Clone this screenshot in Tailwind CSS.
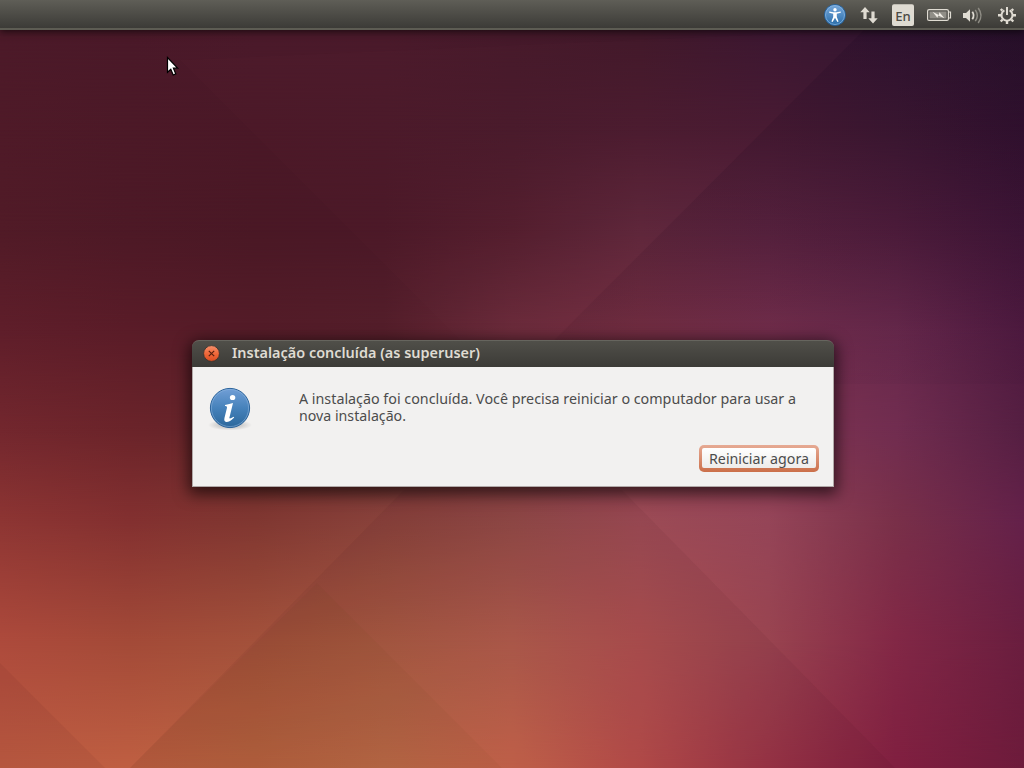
<!DOCTYPE html>
<html lang="pt-BR">
<head>
<meta charset="utf-8">
<title>Instalação concluída</title>
<script src="https://cdn.jsdelivr.net/npm/@tailwindcss/browser@4"></script>
</head>
<body class="relative h-screen w-screen overflow-hidden bg-[#4c1a29] font-['Noto_Sans','Open_Sans',sans-serif]">
<!-- wallpaper: horizontal colour rows faded into each other -->
<svg id="wall" class="absolute inset-0" width="1024" height="768" viewBox="0 0 1024 768" aria-hidden="true"></svg>
<script>
const rows = [
 [30,'4c1a29 4a1929 4b1a2b 4a1a2b 45192a 401829 3a1630 301430 28112a'],
 [130,'4f1a28 4c1927 4a1827 4a1929 481a2b 4a1b2f 471a32 3d1832 32112f'],
 [230,'511b27 4d1926 4a1825 4a1827 521d2d 5e263a 5a233f 501d3c 401637'],
 [330,'5f1e2a 5a1c28 541c28 541e2a 6a2a3a 742e42 742e4c 68294c 4f1a40'],
 [430,'73272e 6b242a 62252a 652a30 742f3c 7e3448 803550 712d50 551f42'],
 [520,'8d3533 833030 803731 89423b 924a47 9c4b55 954558 793049 64214a'],
 [640,'ad4a3c a34a38 a3513b a85a42 b05c4c ad5050 994450 822846 6a1e3f'],
 [768,'be5c42 bf5f42 bb6541 bf6c48 c7654b b84d4a 9a3446 801f40 6d1b3b']];
let defs = '<linearGradient id="f" x2="0" y2="1"><stop stop-color="#000"/><stop offset="1" stop-color="#fff"/></linearGradient><linearGradient id="shade" gradientUnits="userSpaceOnUse" x1="0" y1="30" x2="0" y2="384"><stop stop-color="#10001c" stop-opacity=".09"/><stop offset=".6" stop-color="#10001c" stop-opacity=".08"/><stop offset="1" stop-color="#10001c" stop-opacity=".035"/></linearGradient>', body = '';
rows.forEach(([y, c], i) => {
  defs += `<linearGradient id="g${i}" gradientUnits="userSpaceOnUse" x2="1024">` + c.split(' ').map((k, j) => `<stop offset="${j / 8}" stop-color="#${k}"/>`).join('') + '</linearGradient>';
  if (!i) { body += '<rect width="1024" height="768" fill="url(#g0)"/>'; return; }
  const t = rows[i - 1][0], h = y - t;
  defs += `<mask id="m${i}" maskUnits="userSpaceOnUse" x="0" y="${t}" width="1024" height="${768 - t}" style="mask-type:luminance" color-interpolation="sRGB"><rect y="${t}" width="1024" height="${h}" fill="url(#f)"/><rect y="${y}" width="1024" height="${768 - y}" fill="#fff"/></mask>`;
  body += `<rect y="${t}" width="1024" height="${768 - t}" fill="url(#g${i})" mask="url(#m${i})"/>`;
});
body += '<path d="M864 30H1024V384H510Z" fill="url(#shade)"/>' +
 '<path d="M404 490H622L895 768H130Z" fill="#200010" opacity=".05"/>' +
 '<path d="M317 583L502 768H130Z" fill="#304000" opacity=".035"/>' +
 '<path d="M0 663L105 768H0Z" fill="#200010" opacity=".05"/>' +
 '<path d="M180 60L460 340H556L864 30Z" fill="#ff8090" opacity=".012"/>';
document.getElementById('wall').innerHTML = '<defs>' + defs + '</defs>' + body;
</script>

<div class="relative flex h-full flex-col">
  <header class="flex h-[30px] shrink-0 items-center justify-end border-b-2 border-[#5d5c53] bg-linear-to-b from-[#5f5e57] to-[#3c3b37] shadow-[0_2px_7px_rgba(0,0,0,0.6)]">
    <svg class="mt-px" width="210" height="28" viewBox="814 0 210 28" aria-hidden="true">
      <defs>
        <linearGradient id="blue" x2="0" y2="1"><stop stop-color="#78a9dc"/><stop offset="1" stop-color="#286ca8"/></linearGradient>
      </defs>
      <circle cx="835" cy="14" r="10.5" fill="url(#blue)" stroke="#245f99"/>
      <circle cx="835" cy="14" r="9.5" fill="none" stroke="#8bb7e2" stroke-width=".7"/>
      <circle cx="835" cy="8.7" r="1.7" fill="#fff"/>
      <path d="M829.2 10.4L833.4 11.2H836.6L840.8 10.4V11.7L836.8 12.8V16L838.6 20.6L837.4 21L835 16.7L832.6 21L831.4 20.6L833.2 16V12.8L829.2 11.7Z" fill="#fff"/>
      <path d="M865 6L869.7 11.3H866.6V18H863.4V11.3H860.3Z M873 22.5L868.3 17.2H871.4V10.5H874.6V17.2H877.7Z" fill="#dfdbd2"/>
      <rect x="892" y="3.3" width="22" height="21.7" rx="2" fill="#dfdbd2"/>
      <text x="903" y="20" text-anchor="middle" font-size="12.5" font-weight="500" fill="#4b4a44" textLength="15.5" lengthAdjust="spacingAndGlyphs">En</text>
      <rect x="927.6" y="8.6" width="20.8" height="10.8" rx="1.5" fill="none" stroke="#dfdbd2" stroke-width="1.2"/>
      <rect x="929.5" y="10.5" width="17" height="7" fill="#908e87"/>
      <path d="M949 11H950.5V17H949" fill="none" stroke="#dfdbd2" stroke-width="1.2"/>
      <path d="M932.5 10.8L938.8 14L939.4 11.2L944.5 17.2L938.2 14.6L937.4 16.8Z" fill="#efece5"/>
      <path d="M963 12H966L970 8.3V20.7L966 17H963Z" fill="#dfdbd2"/>
      <path d="M972.3 10.8Q975 14.5 972.3 18.2" fill="none" stroke="#dfdbd2" stroke-width="1.8"/>
      <path d="M975.3 8.8Q979.2 14.5 975.3 20.2M978.2 7Q983.8 14.5 978.2 22" fill="none" stroke="#8e8c84" stroke-width="1.5"/>
      <g fill="none" stroke="#dfdbd2">
        <path d="M1004.4 9.4A5.5 5.5 0 1 0 1009.6 9.4" stroke-width="2"/>
        <path d="M1007 6V14" stroke-width="2"/>
        <path d="M1002.4 9.6L1000.8 8M1011.6 9.6L1013.2 8M1001.5 14.2H998M1012.5 14.2H1016M1002.7 18.5L1000.7 20.5M1011.3 18.5L1013.3 20.5M1007 20V23" stroke-width="2.4"/>
      </g>
    </svg>
  </header>

  <main class="mt-[310px] ml-[192px] flex h-[147px] w-[642px] flex-col rounded-t-[7px] shadow-[0_4px_15px_3px_rgba(0,0,0,0.62)]">
    <div class="flex h-[27px] shrink-0 items-start rounded-t-[7px] border-t border-[#66655e] bg-linear-to-b from-[#504f49] to-[#3c3b37] pl-[11px]">
      <svg class="mt-1" width="17" height="17" viewBox="0 0 17 17" aria-hidden="true">
        <defs><linearGradient id="close" x2="0" y2="1"><stop stop-color="#f7906c"/><stop offset=".5" stop-color="#ef693b"/><stop offset="1" stop-color="#da4c20"/></linearGradient></defs>
        <circle cx="8.5" cy="8.5" r="7.9" fill="url(#close)" stroke="#33322e" stroke-width=".8"/>
        <path d="M5.8 5.8L11.2 11.2M11.2 5.8L5.8 11.2" stroke="#58200f" stroke-width="1.2"/>
      </svg>
      <svg class="ml-3" width="260" height="26" role="img"><text x="0" y="17" font-size="14" font-weight="600" fill="#dfdbd2" textLength="248" lengthAdjust="spacingAndGlyphs">Instalação concluída (as superuser)</text></svg>
    </div>
    <div class="flex flex-1 flex-col border border-t-0 border-[#b1a9a8] bg-[#f2f1f0] pt-[19px] pl-[14px] pr-[14px]">
      <div class="flex h-[59px]">
        <svg width="46" height="46" viewBox="0 0 46 46" aria-hidden="true">
          <defs>
            <radialGradient id="sh"><stop stop-color="#000" stop-opacity=".3"/><stop offset="1" stop-color="#000" stop-opacity="0"/></radialGradient>
            <linearGradient id="info" x2="0" y2="1"><stop stop-color="#729fd6"/><stop offset=".5" stop-color="#4682bb"/><stop offset="1" stop-color="#2b679b"/></linearGradient>
          </defs>
          <ellipse cx="23" cy="39" rx="22" ry="5.5" fill="url(#sh)"/>
          <circle cx="23" cy="22" r="19.6" fill="url(#info)" stroke="#2a639b"/>
          <circle cx="23" cy="22" r="18.6" fill="none" stroke="#8db5df" stroke-opacity=".55"/>
          <ellipse cx="25.6" cy="11.5" rx="2.7" ry="2.6" fill="#fff"/>
          <path d="M18 19Q22.5 17.8 26 17L22.4 31.8Q22.2 33.8 26.6 30.8L27.2 31.5Q22.5 36.2 19.2 36Q16.6 35.5 17.5 31.8L20 21.8Q20.4 19.8 18 20.1Z" fill="#fff"/>
        </svg>
        <svg class="ml-[46px]" width="505" height="58" role="img">
          <g font-size="14.3" fill="#4c4c4c">
            <text x="0" y="18" textLength="497" lengthAdjust="spacingAndGlyphs">A instalação foi concluída. Você precisa reiniciar o computador para usar a</text>
            <text x="0" y="35" textLength="107" lengthAdjust="spacingAndGlyphs">nova instalação.</text>
          </g>
        </svg>
      </div>
      <button class="ml-auto flex h-[27px] w-[120px] rounded-[5px] bg-linear-to-b from-[#e6aa94] to-[#cb6f49] px-[3px] pt-[3px] pb-1">
        <span class="flex flex-1 justify-center rounded-xs bg-linear-to-b from-white to-[#eeecea]">
          <svg width="100" height="20" role="img"><text x="0" y="16" font-size="14.3" fill="#4c4c4c" textLength="100" lengthAdjust="spacingAndGlyphs">Reiniciar agora</text></svg>
        </span>
      </button>
    </div>
  </main>
</div>
<svg class="absolute top-[56px] left-[166px]" width="14" height="22" viewBox="0 0 14 22" aria-hidden="true"><path d="M1.5 1.5V16.3L4.8 13.2L7.2 19L9.8 17.9L7.4 12.2H11.6Z" fill="#fff" stroke="#000" stroke-width="1.2"/></svg>
</body>
</html>
